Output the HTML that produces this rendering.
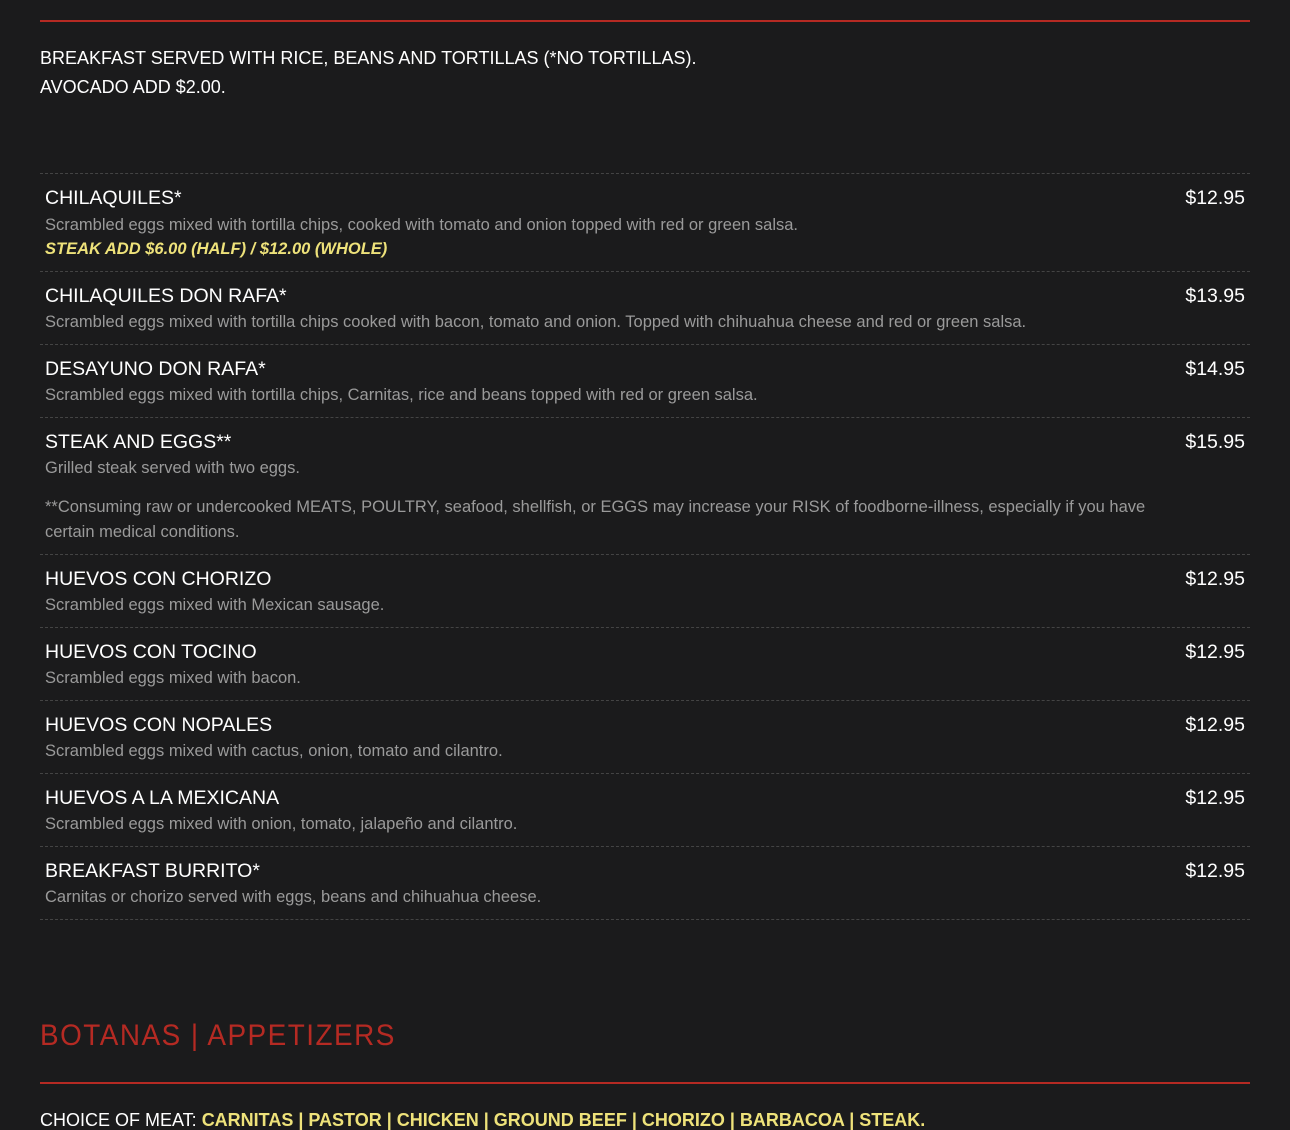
<!DOCTYPE html>
<html><head><meta charset="utf-8"><style>
body{margin:0;background:#1b1b1c;width:1290px;height:1129px;overflow:hidden;font-family:"Liberation Sans",sans-serif;position:relative}
div{position:absolute;white-space:nowrap}
.red{left:40px;width:1210px;height:2px;background:#b52a23}
.dash{left:40px;width:1210px;border-top:1px dashed #444}
.t{left:45px;color:#fff;font-size:19.5px;line-height:22px}
.p{right:45px;color:#fff;font-size:19.5px;line-height:22px}
.d{left:45px;color:#9a9a9a;font-size:16.5px;line-height:20px}
.h{left:40px;color:#fff;font-size:18px;line-height:20px}
</style></head><body>
<div class="red" style="top:20px"></div>
<div class="h" style="top:48px">BREAKFAST SERVED WITH RICE, BEANS AND TORTILLAS (*NO TORTILLAS).</div>
<div class="h" style="top:77px">AVOCADO ADD $2.00.</div>

<div class="dash" style="top:173px"></div>
<div class="t" style="top:187px">CHILAQUILES*</div><div class="p" style="top:187px">$12.95</div>
<div class="d" style="top:215px">Scrambled eggs mixed with tortilla chips, cooked with tomato and onion topped with red or green salsa.</div>
<div class="d" style="top:239px;color:#eee27a;font-weight:bold;font-style:italic">STEAK ADD $6.00 (HALF) / $12.00 (WHOLE)</div>

<div class="dash" style="top:271px"></div>
<div class="t" style="top:285px">CHILAQUILES DON RAFA*</div><div class="p" style="top:285px">$13.95</div>
<div class="d" style="top:312px">Scrambled eggs mixed with tortilla chips cooked with bacon, tomato and onion. Topped with chihuahua cheese and red or green salsa.</div>

<div class="dash" style="top:344px"></div>
<div class="t" style="top:358px">DESAYUNO DON RAFA*</div><div class="p" style="top:358px">$14.95</div>
<div class="d" style="top:385px">Scrambled eggs mixed with tortilla chips, Carnitas, rice and beans topped with red or green salsa.</div>

<div class="dash" style="top:417px"></div>
<div class="t" style="top:431px">STEAK AND EGGS**</div><div class="p" style="top:431px">$15.95</div>
<div class="d" style="top:458px">Grilled steak served with two eggs.</div>
<div class="d" style="top:497px">**Consuming raw or undercooked MEATS, POULTRY, seafood, shellfish, or EGGS may increase your RISK of foodborne-illness, especially if you have</div>
<div class="d" style="top:522px">certain medical conditions.</div>

<div class="dash" style="top:554px"></div>
<div class="t" style="top:568px">HUEVOS CON CHORIZO</div><div class="p" style="top:568px">$12.95</div>
<div class="d" style="top:595px">Scrambled eggs mixed with Mexican sausage.</div>

<div class="dash" style="top:627px"></div>
<div class="t" style="top:641px">HUEVOS CON TOCINO</div><div class="p" style="top:641px">$12.95</div>
<div class="d" style="top:668px">Scrambled eggs mixed with bacon.</div>

<div class="dash" style="top:700px"></div>
<div class="t" style="top:714px">HUEVOS CON NOPALES</div><div class="p" style="top:714px">$12.95</div>
<div class="d" style="top:741px">Scrambled eggs mixed with cactus, onion, tomato and cilantro.</div>

<div class="dash" style="top:773px"></div>
<div class="t" style="top:787px">HUEVOS A LA MEXICANA</div><div class="p" style="top:787px">$12.95</div>
<div class="d" style="top:814px">Scrambled eggs mixed with onion, tomato, jalapeño and cilantro.</div>

<div class="dash" style="top:846px"></div>
<div class="t" style="top:860px">BREAKFAST BURRITO*</div><div class="p" style="top:860px">$12.95</div>
<div class="d" style="top:887px">Carnitas or chorizo served with eggs, beans and chihuahua cheese.</div>
<div class="dash" style="top:919px"></div>

<div style="left:40px;top:1017px;color:#b52a23;font-size:30px;line-height:38px;letter-spacing:1.6px;transform:scaleX(0.93);transform-origin:left">BOTANAS | APPETIZERS</div>
<div class="red" style="top:1082px"></div>
<div class="h" style="top:1110px">CHOICE OF MEAT: <b style="color:#eee27a">CARNITAS | PASTOR | CHICKEN | GROUND BEEF | CHORIZO | BARBACOA | STEAK.</b></div>
</body></html>
